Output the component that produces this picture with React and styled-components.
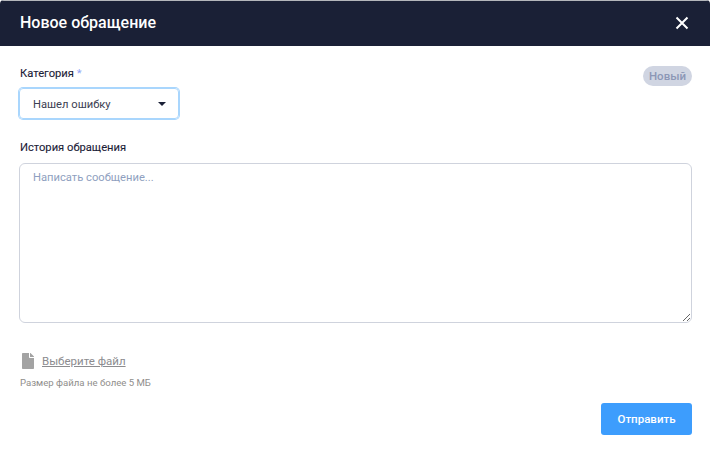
import React from "react";
import styled, { createGlobalStyle } from "styled-components";

const Global = createGlobalStyle`
  html, body { margin: 0; padding: 0; background: #ffffff; }
  body { font-family: Roboto, "Liberation Sans", sans-serif; }
  * { box-sizing: border-box; }
`;

const Modal = styled.div`
  width: 710px;
  height: 453px;
  background: #fff;
  display: flex;
  flex-direction: column;
  overflow: hidden;
  border-radius: 4px;
`;

const Header = styled.header`
  height: 46px;
  flex: none;
  background: #1a2036;
  border-top: 1px solid #b4b6bb;
  display: flex;
  align-items: center;
  justify-content: space-between;
  padding: 0 21px 2px 20px;
`;

const Title = styled.h1`
  margin: 0;
  font-size: 16px;
  line-height: 20px;
  font-weight: 500;
  color: #fff;
`;

const Close = styled.button`
  border: 0;
  padding: 0;
  background: none;
  width: 14px;
  height: 14px;
  display: block;
  color: #fff;
  svg { display: block; }
`;

const Body = styled.main`
  flex: 1;
  display: flex;
  flex-direction: column;
  padding: 20px 18px 18px 19px;
`;

const TopRow = styled.div`
  display: flex;
  justify-content: space-between;
  align-items: flex-start;
`;

const Field = styled.div`
  display: flex;
  flex-direction: column;
`;

const Label = styled.label`
  padding-left: 1px;
  font-size: 11.2px;
  line-height: 16px;
  color: #1a2036;
  font-weight: 400;
  -webkit-text-stroke: 0.1px #1a2036;
`;

const Star = styled.span`
  color: #8fa5f5;
  -webkit-text-stroke: 0;
`;

const Select = styled.div`
  margin: 6px 0 0 0;
  width: 160px;
  height: 31px;
  border: 1px solid #a9d6fd;
  box-shadow: 0 0 0 1px #a9d6fd;
  border-radius: 4px;
  display: flex;
  align-items: center;
  justify-content: space-between;
  padding: 1px 12px 0 13px;
  font-size: 11.2px;
  color: #3c4052;
`;

const Caret = styled.span`
  width: 0;
  height: 0;
  border-left: 4px solid transparent;
  border-right: 4px solid transparent;
  border-top: 4px solid #1a2036;
`;

const Badge = styled.span`
  height: 20px;
  padding: 0 6px;
  border-radius: 10px;
  background: #d0d5e2;
  color: #8c97b6;
  font-size: 11.5px;
  font-weight: 500;
  line-height: 20px;
`;

const HistoryLabel = styled(Label)`
  margin-top: 21px;
`;

const Area = styled.textarea`
  margin-top: 7px;
  display: block;
  width: 673px;
  height: 160px;
  border: 1px solid #cfd3dd;
  border-radius: 6px;
  padding: 7px 13px;
  font: 400 11.2px/14px Roboto, sans-serif;
  color: #3c4052;
  background: #fff;
  outline: none;
  &::placeholder { color: #8f9fc0; opacity: 1; }
`;

const FileRow = styled.div`
  margin-top: 30px;
  margin-left: 3px;
  display: flex;
  align-items: center;
  gap: 8px;
`;

const FileLink = styled.a`
  font-size: 11.5px;
  line-height: 16px;
  color: #8c8c8f;
  text-decoration: underline;
`;

const Hint = styled.div`
  margin-top: 8px;
  padding-left: 1px;
  font-size: 9.6px;
  line-height: 12px;
  color: #908e8c;
`;

const Footer = styled.div`
  margin-top: auto;
  display: flex;
  justify-content: flex-end;
`;

const Send = styled.button`
  width: 91px;
  height: 32px;
  border: 0;
  border-radius: 3px;
  background: #3d9dfd;
  color: #fff;
  font: 500 11.5px Roboto, sans-serif;
`;

export default function App() {
  return (
    <Modal>
      <Global />
      <Header>
        <Title>Новое обращение</Title>
        <Close aria-label="close">
          <svg width="14" height="14" viewBox="0 0 14 14" fill="none">
            <path d="M1.5 1.5l11 11M12.5 1.5l-11 11" stroke="currentColor" strokeWidth="2" />
          </svg>
        </Close>
      </Header>
      <Body>
        <TopRow>
          <Field>
            <Label>Категория <Star>*</Star></Label>
            <Select>
              Нашел ошибку
              <Caret />
            </Select>
          </Field>
          <Badge>Новый</Badge>
        </TopRow>
        <HistoryLabel>История обращения</HistoryLabel>
        <Area placeholder="Написать сообщение..." />
        <FileRow>
          <svg width="12" height="16" viewBox="0 0 384 512">
            <path d="M224 136V0H24C10.7 0 0 10.7 0 24v464c0 13.3 10.7 24 24 24h336c13.3 0 24-10.7 24-24V160H248c-13.2 0-24-10.8-24-24zm160-14.1v6.1H256V0h6.1c6.4 0 12.5 2.5 17 7l97.9 98c4.5 4.5 7 10.6 7 16.9z" fill="#a3a3a3" />
          </svg>
          <FileLink>Выберите файл</FileLink>
        </FileRow>
        <Hint>Размер файла не более 5 МБ</Hint>
        <Footer>
          <Send>Отправить</Send>
        </Footer>
      </Body>
    </Modal>
  );
}
